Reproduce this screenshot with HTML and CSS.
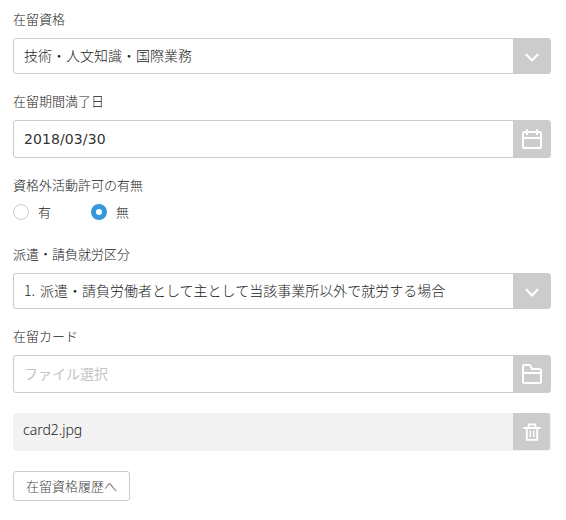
FILE: index.html
```html
<!DOCTYPE html>
<html lang="ja">
<head>
    <meta charset="UTF-8">
    <meta name="viewport" content="width=device-width, initial-scale=1.0">
    <title>在留資格</title>
    <link rel="stylesheet" href="styles.css">
</head>
<body>
    <form class="form">
        <div class="form_group">
            <p class="label">在留資格</p>
            <div class="field">
                <span class="field_text">技術・人文知識・国際業務</span>
                <span class="field_icon">
                    <svg width="37" height="36" viewBox="0 0 37 36"><path class="arrow" d="M12.8 16l6.2 6.4 6.2-6.4"/></svg>
                </span>
            </div>
        </div>
        <div class="form_group">
            <p class="label">在留期間満了日</p>
            <div class="field field_tall">
                <span class="field_text date">2018/03/30</span>
                <span class="field_icon">
                    <svg width="37" height="38" viewBox="0 0 37 38"><path d="M11.5 12h15q1.5 0 1.5 1.5v13q0 1.5-1.5 1.5h-15q-1.5 0-1.5-1.5v-13q0-1.5 1.5-1.5zM10 18h18M14 9v6M24 9v6"/></svg>
                </span>
            </div>
        </div>
        <div class="form_group radio_group">
            <p class="label">資格外活動許可の有無</p>
            <div class="radios">
                <label class="radio"><span class="radio_mark"></span>有</label>
                <label class="radio"><span class="radio_mark checked"></span>無</label>
            </div>
        </div>
        <div class="form_group">
            <p class="label">派遣・請負就労区分</p>
            <div class="field">
                <span class="field_text"><span class="number">1.</span>派遣・請負労働者として主として当該事業所以外で就労する場合</span>
                <span class="field_icon">
                    <svg width="37" height="36" viewBox="0 0 37 36"><path class="arrow" d="M12.8 16l6.2 6.4 6.2-6.4"/></svg>
                </span>
            </div>
        </div>
        <div class="form_group file_group">
            <p class="label">在留カード</p>
            <div class="field field_tall">
                <span class="field_text placeholder">ファイル選択</span>
                <span class="field_icon">
                    <svg width="37" height="38" viewBox="0 0 37 38"><path d="M11.5 10h4.7q1 0 1.5 1l1.3 3h7.5q1.5 0 1.5 1.5v11q0 1.5-1.5 1.5h-15q-1.5 0-1.5-1.5v-15q0-1.5 1.5-1.5zM10 18h18"/></svg>
                </span>
            </div>
        </div>
        <div class="file">
            <span class="file_name">card2.jpg</span>
            <span class="file_delete">
                <svg width="37" height="37" viewBox="0 0 37 37"><path class="trash" d="M10.5 15h17M15.7 14.5v-3.2h6.6v3.2M13.8 15v11.8h10.4V15"/><path class="trash_line" d="M17.3 17.5v6.5M20.7 17.5v6.5"/></svg>
            </span>
        </div>
        <button type="button" class="history_btn">在留資格履歴へ</button>
    </form>
</body>
</html>
```

FILE: styles.css
```css
* {
    margin: 0;
    padding: 0;
    box-sizing: border-box;
}

body {
    background-color: #fff;
    color: #222;
    font-family: "Noto Sans CJK JP", "Noto Sans", sans-serif;
    font-weight: 300;
    font-size: 13px;
}

.form {
    padding: 10px 15px 0 13px;
}

.form_group {
    margin-bottom: 18px;
}

.radio_group {
    margin-bottom: 25px;
}

.file_group {
    margin-bottom: 20px;
}

.label {
    height: 20px;
    margin-bottom: 8px;
    line-height: 18px;
}

/* 入力欄 */
.field {
    display: flex;
    height: 36px;
    border: 1px solid #ccc;
    border-radius: 3px;
    background-color: #ccc;
}

.field_tall {
    height: 38px;
}

.field_text {
    flex: 1;
    display: flex;
    align-items: center;
    padding-left: 10px;
    padding-bottom: 2px;
    border-radius: 2px 0 0 2px;
    background-color: #fff;
    font-size: 14px;
    white-space: nowrap;
}

.date {
    padding-bottom: 0;
    color: #333;
    font-family: "DejaVu Sans", sans-serif;
    font-weight: 400;
    letter-spacing: 0.1px;
}

.number {
    width: 16px;
}

.placeholder {
    color: #c4c4c4;
    font-weight: 400;
}

.field_icon {
    width: 37px;
    display: flex;
    align-items: center;
    justify-content: center;
}

svg {
    flex: none;
    fill: none;
    stroke: #fff;
    stroke-width: 2;
}

.arrow {
    stroke-width: 2.2;
}

.trash {
    stroke-width: 1.8;
}

.trash_line {
    stroke-width: 1.3;
}

/* ラジオボタン */
.radios {
    display: flex;
    height: 16px;
}

.radio {
    display: flex;
    align-items: center;
    width: 78px;
    line-height: 16px;
}

.radio_mark {
    width: 16px;
    height: 16px;
    margin-right: 9px;
    border: 1px solid #ccc;
    border-radius: 50%;
}

.radio_mark.checked {
    border: 5px solid #3498db;
}

/* 選択済みファイル */
.file {
    display: flex;
    height: 38px;
    margin-bottom: 20px;
    padding-right: 1px;
    border-radius: 3px;
    background-color: #f3f3f3;
}

.file_name {
    flex: 1;
    padding-left: 10px;
    font-family: "Noto Sans", sans-serif;
    font-size: 14px;
    line-height: 34px;
}

.file_delete {
    width: 37px;
    height: 37px;
    border-radius: 0 3px 3px 0;
    background-color: #ccc;
}

.history_btn {
    display: block;
    width: 117px;
    height: 30px;
    padding-bottom: 2px;
    border: 1px solid #ccc;
    border-radius: 3px;
    background-color: #fff;
    color: #444;
    font-family: inherit;
    font-size: 13px;
    font-weight: 300;
    white-space: nowrap;
}
```
